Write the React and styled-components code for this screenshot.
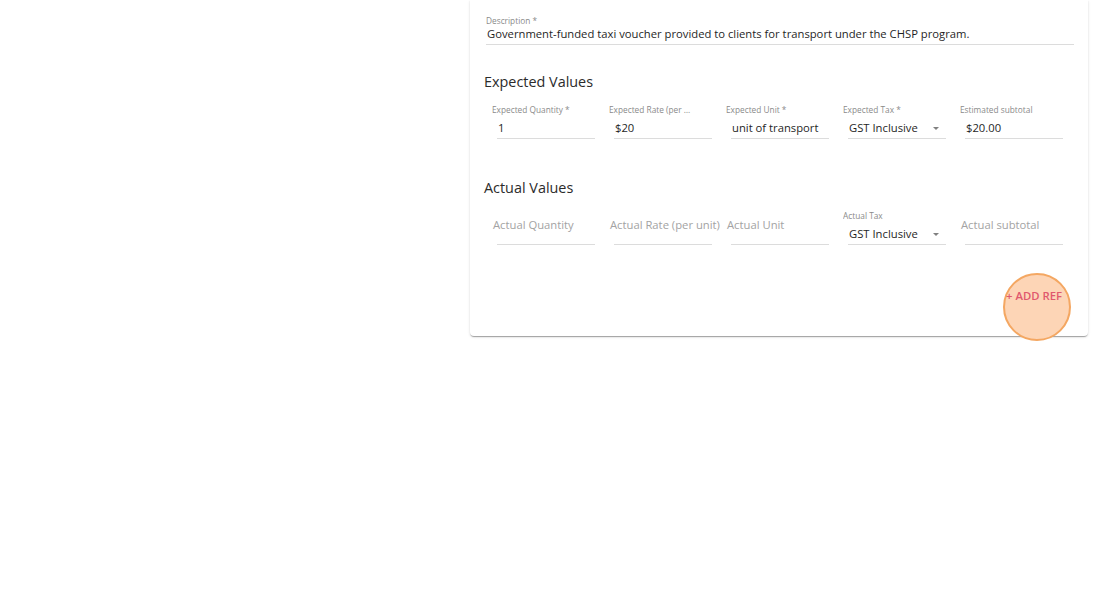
import React from "react";
import styled, { createGlobalStyle } from "styled-components";

const Global = createGlobalStyle`
  html, body { margin: 0; padding: 0; background: #fff; }
  body { font-family: "Open Sans", "Noto Sans", sans-serif; color: #222; }
`;

const Page = styled.div`
  width: 1101px;
  height: 615px;
  display: flex;
  justify-content: flex-end;
  align-items: flex-start;
  padding-right: 13px;
  box-sizing: border-box;
`;

const Card = styled.section`
  width: 618px;
  box-sizing: border-box;
  background: #fff;
  border-radius: 0 0 4px 4px;
  box-shadow: 0 2px 1px -1px rgba(0,0,0,0.2), 0 1px 1px 0 rgba(0,0,0,0.14), 0 1px 3px 0 rgba(0,0,0,0.12);
  padding: 15px 14px 22px 16px;
  display: flex;
  flex-direction: column;
`;

const FullField = styled.div`
  display: flex;
  flex-direction: column;
`;

const Label = styled.label`
  font-size: 8.3px;
  line-height: 12px;
  height: 11px;
  max-width: ${(p) => (p.$full ? "none" : "84px")};
  color: #8a8a8a;
  white-space: nowrap;
  overflow: hidden;
  text-overflow: ellipsis;
`;

const Value = styled.div`
  font-size: 11.25px;
  line-height: 16px;
  height: 16px;
  color: #1f1f1f;
  padding: 0 0 2px 1px;
  margin-top: ${(p) => p.$top}px;
  margin-left: ${(p) => p.$indent || 0}px;
  border-bottom: 1px solid #dcdcdc;
  display: flex;
  align-items: center;
  justify-content: space-between;
  white-space: nowrap;
`;

const Heading = styled.h3`
  margin: ${(p) => p.$top}px 0 0 -2px;
  font-size: 14.4px;
  line-height: 20px;
  font-weight: 400;
  color: #2b2b2b;
`;

const Row = styled.div`
  display: flex;
  gap: 14px;
  margin: 12px 0 0 6px;
`;

const Field = styled.div`
  position: relative;
  width: 103px;
  display: flex;
  flex-direction: column;
`;

const Placeholder = styled.span`
  position: absolute;
  left: 1px;
  top: 7px;
  font-size: 11.25px;
  line-height: 16px;
  color: #a3a3a3;
  white-space: nowrap;
`;

const Caret = styled.span`
  width: 0;
  height: 0;
  border-left: 3.5px solid transparent;
  border-right: 3.5px solid transparent;
  border-top: 3.5px solid #808080;
  margin-right: 7px;
`;

const Footer = styled.div`
  display: flex;
  justify-content: flex-end;
  margin-top: 33px;
`;

const AddButton = styled.button`
  position: relative;
  z-index: 0;
  border: none;
  background: transparent;
  font-family: inherit;
  font-size: 11.3px;
  font-weight: 600;
  text-transform: uppercase;
  color: #e0586d;
  padding: 0 8px;
  height: 36px;
  line-height: 36px;
  margin-right: 4px;
  cursor: pointer;
`;

const Ripple = styled.span`
  position: absolute;
  z-index: -1;
  right: -1px;
  top: -5px;
  width: 68px;
  height: 68px;
  border-radius: 50%;
  box-sizing: border-box;
  background: #fdd5b6;
  border: 2px solid #f4a762;
`;

function InputField({ label, value, select, shrink = true }) {
  return (
    <Field>
      <Label>{shrink ? label : ""}</Label>
      {!shrink && <Placeholder>{label}</Placeholder>}
      <Value $indent={5} $top={5}>
        <span>{value}</span>
        {select && <Caret />}
      </Value>
    </Field>
  );
}

export default function App() {
  return (
    <>
      <Global />
      <Page>
        <Card>
          <FullField>
            <Label $full>Description *</Label>
            <Value $top={0}>
              Government-funded taxi voucher provided to clients for transport under the CHSP program.
            </Value>
          </FullField>

          <Heading $top={27}>Expected Values</Heading>
          <Row>
            <InputField label="Expected Quantity *" value="1" />
            <InputField label="Expected Rate (per unit) *" value="$20" />
            <InputField label="Expected Unit *" value="unit of transport" />
            <InputField label="Expected Tax *" value="GST Inclusive" select />
            <InputField label="Estimated subtotal" value="$20.00" />
          </Row>

          <Heading $top={39}>Actual Values</Heading>
          <Row>
            <InputField label="Actual Quantity" value="" shrink={false} />
            <InputField label="Actual Rate (per unit)" value="" shrink={false} />
            <InputField label="Actual Unit" value="" shrink={false} />
            <InputField label="Actual Tax" value="GST Inclusive" select />
            <InputField label="Actual subtotal" value="" shrink={false} />
          </Row>

          <Footer>
            <AddButton>
              <Ripple />+ Add Ref
            </AddButton>
          </Footer>
        </Card>
      </Page>
    </>
  );
}
